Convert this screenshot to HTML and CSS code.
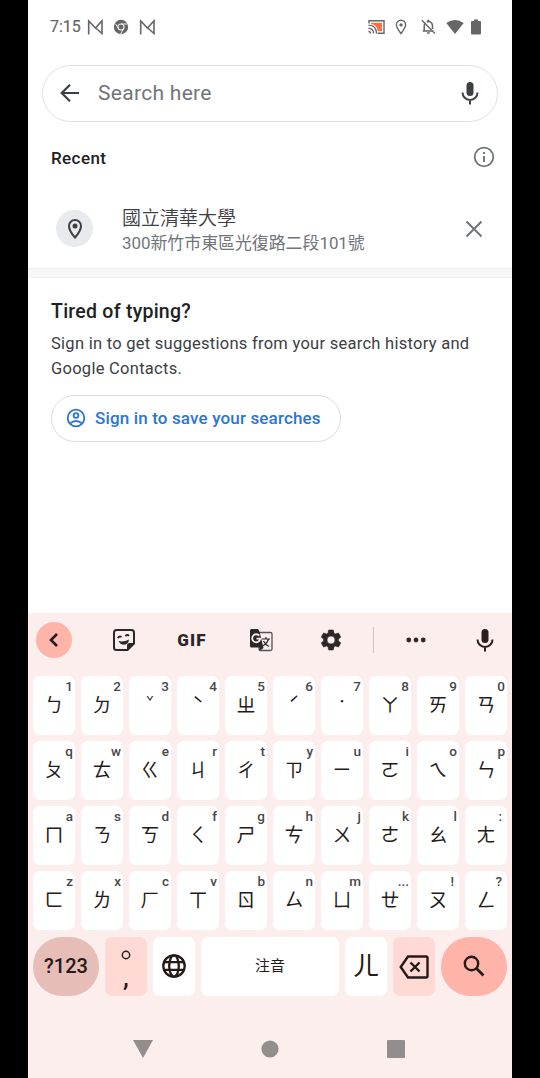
FILE: index.html
```
<!DOCTYPE html>
<html lang="zh-Hant">
<head>
<meta charset="utf-8">
<title>Search</title>
<link rel="stylesheet" href="styles.css">
</head>
<body>
<div class="screen">
  <header class="status">
    <span class="clock">7:15</span>
    <svg class="note-m" width="16" height="16" viewBox="0 0 16 16"><path d="M1.700 15.500V2L8.500 9 15 1.800V14.500L8.800 9" fill="none" stroke="#666" stroke-width="1.600"/></svg>
    <svg class="note-c" width="16" height="16" viewBox="0 0 16 16"><circle cx="8" cy="8" r="7.200" fill="#666"/><circle cx="8" cy="8" r="3" fill="none" stroke="#eee" stroke-width="1.100"/><path d="M8 5h6M5.400 9.500L2.500 4.800M10.600 9.500L7.600 15" stroke="#eee"/></svg>
    <svg class="note-m" width="16" height="16" viewBox="0 0 16 16"><path d="M1.700 15.500V2L8.500 9 15 1.800V14.500L8.800 9" fill="none" stroke="#666" stroke-width="1.600"/></svg>
    <span class="grow"></span>
    <svg class="cast" width="17" height="14" viewBox="0 0 17 14"><path d="M1 3.500V.8h15v12.400H9.500" fill="none" stroke="#666" stroke-width="1.400"/><path d="M3 2.800h11v8.500H10Q9 5 3 4z" fill="#ff7043"/><path d="M.5 5.200q8 .3 8 8.300M.5 8.200q5 .3 5 5.300M.5 11.500q2 0 2 2" fill="none" stroke="#666" stroke-width="1.300"/></svg>
    <svg class="pin" width="12" height="16" viewBox="0 0 12 16"><path d="M6 14.600C3.500 11.300 1.400 8.600 1.400 5.800a4.600 4.600 0 0 1 9.200 0c0 2.800-2.100 5.500-4.600 8.800z" fill="none" stroke="#666" stroke-width="1.400"/><circle cx="6" cy="5.900" r="1.700" fill="#666"/></svg>
    <svg class="bell" width="15" height="16" viewBox="0 0 15 16"><path d="M3.200 12V7q0-2 1.200-3.200M5.800 3Q7 2.300 8.500 2.600 11.500 3.500 11.500 7v3M1.800 12h9.500" fill="none" stroke="#666" stroke-width="1.500"/><path d="M6.300.8h2v2h-2zM5.800 13.300h3.200q-.3 1.800-1.600 1.800t-1.600-1.800z" fill="#666"/><path d="M.8 1.300l13.200 13.200" stroke="#666" stroke-width="1.400"/></svg>
    <svg class="wifi" width="18" height="14" viewBox="0 0 18 14"><path d="M.3 3Q9-2.800 17.700 3L9 14z" fill="#666"/></svg>
    <svg class="batt" width="10" height="16" viewBox="0 0 10 16"><path d="M3 .5h4V2h2q1 0 1 1v11.500q0 1-1 1H1q-1 0-1-1V3q0-1 1-1h2z" fill="#666"/></svg>
  </header>

  <div class="search">
    <svg width="20" height="20" viewBox="0 0 20 20"><path d="M19 10H2M10 1.700L1.700 10l8.300 8.300" fill="none" stroke="#3c4043" stroke-width="2.200"/></svg>
    <span class="placeholder">Search here</span>
    <svg width="18" height="24" viewBox="0 0 18 24"><rect x="5.500" y="1" width="7" height="14" rx="3.500" fill="#3c4043"/><path d="M1.500 11.500a7.500 7.500 0 0 0 15 0M9 19v4.500" fill="none" stroke="#3c4043" stroke-width="2"/></svg>
  </div>

  <div class="recent">
    <h2>Recent</h2>
    <svg width="22" height="22" viewBox="0 0 22 22"><circle cx="11" cy="11" r="9.300" fill="none" stroke="#70757a" stroke-width="1.800"/><path d="M11 10v6M11 6v2" stroke="#70757a" stroke-width="1.900"/></svg>
  </div>

  <div class="place">
    <span class="place-icon"><svg width="16" height="22" viewBox="0 0 16 22"><path d="M8 19.500C4.500 15.500 2 11.700 2 8a6 6 0 0 1 12 0c0 3.700-2.500 7.500-6 11.500z" fill="none" stroke="#3c4043" stroke-width="2"/><circle cx="8" cy="8" r="2.500" fill="#3c4043"/></svg></span>
    <div class="place-text">
      <div class="place-name">國立清華大學</div>
      <div class="place-addr">300新竹市東區光復路二段101號</div>
    </div>
    <svg width="18" height="18" viewBox="0 0 18 18"><path d="M1.500 1.500l15 15M16.500 1.500l-15 15" stroke="#70757a" stroke-width="2"/></svg>
  </div>
  <div class="divider"></div>

  <section class="signin">
    <h3>Tired of typing?</h3>
    <p>Sign in to get suggestions from your search history and<br>Google Contacts.</p>
    <div class="signin-btn">
      <svg width="20" height="20" viewBox="0 0 20 20" fill="none" stroke="#2b75d6" stroke-width="1.800"><circle cx="10" cy="10" r="8.300"/><circle cx="10" cy="7.500" r="2.400"/><path d="M4 15.500q6-5 12 0"/></svg>
      <span>Sign in to save your searches</span>
    </div>
  </section>

  <section class="keyboard">
    <div class="tools">
      <span class="tool-back"><svg width="12" height="16" viewBox="0 0 12 16"><path d="M9 2L3 8l6 6" fill="none" stroke="#241a18" stroke-width="2.600"/></svg></span>
      <svg class="t-sticker" width="24" height="24" viewBox="0 0 24 24"><path d="M15.500 22H4.500Q2 22 2 19.500v-15Q2 2 4.500 2h15Q22 2 22 4.500v11z" fill="none" stroke="#2b2827" stroke-width="2"/><path d="M15 22v-4.500q0-2.500 2.500-2.500H22zM6.500 13q5 1.300 10.500-1.500-.5 5-5 5.200-4 0-5.500-3.700z" fill="#2b2827"/><path d="M5.800 10q1.500-2.300 3.700-1.200M13.300 8q2.200-1.700 3.700-.2" fill="none" stroke="#2b2827" stroke-width="1.900"/></svg>
      <span class="t-gif">GIF</span>
      <span class="t-translate"><svg width="24" height="24" viewBox="0 0 24 24"><rect x="10" y="4.500" width="13" height="18" rx="1.500" fill="#fceeec" stroke="#555" stroke-width="1.300"/><path d="M13 11h8M17 9v2M19.500 11q-1.500 5-6 7M14.500 13q2 4 5.500 5.500" fill="none" stroke="#2b2827" stroke-width="1.200"/><path d="M2.500 1H9l1.500 2.500L14.500 20l-4 3v-3.500h-8Q1 19.500 1 18V2.500Q1 1 2.500 1z" fill="#2b2827"/><path d="M10.300 7.700A4 4 0 1 0 11.200 10.700H7.500" fill="none" stroke="#fceeec" stroke-width="1.800"/></svg></span>
      <svg class="t-gear" width="24" height="24" viewBox="0 0 24 24"><path fill="#2b2827" stroke="#2b2827" stroke-width=".6" d="M19.430 12.980c.04-.32.070-.64.070-.98s-.03-.66-.07-.98l2.110-1.650c.19-.15.24-.42.12-.64l-2-3.460c-.12-.22-.39-.3-.61-.22l-2.490 1c-.52-.4-1.080-.73-1.690-.98l-.38-2.650C14.460 2.180 14.250 2 14 2h-4c-.25 0-.46.18-.49.42l-.38 2.650c-.61.25-1.170.59-1.690.98l-2.490-1c-.23-.09-.49 0-.61.22l-2 3.460c-.13.22-.07.49.12.64l2.110 1.650c-.04.32-.07.65-.07.98s.03.66.07.98l-2.110 1.650c-.19.15-.24.42-.12.64l2 3.460c.12.22.39.3.61.22l2.490-1c.52.4 1.080.73 1.690.98l.38 2.650c.03.24.24.42.49.42h4c.25 0 .46-.18.49-.42l.38-2.650c.61-.25 1.170-.59 1.690-.98l2.490 1c.23.09.49 0 .61-.22l2-3.460c.12-.22.07-.49-.12-.64l-2.110-1.650zM12 16a4 4 0 1 1 0-8 4 4 0 0 1 0 8z"/></svg>
      <span class="t-sep"></span>
      <svg class="t-more" width="20" height="6" viewBox="0 0 20 6" fill="#2b2827"><circle cx="2.800" cy="3" r="2.400"/><circle cx="10" cy="3" r="2.400"/><circle cx="17.200" cy="3" r="2.400"/></svg>
      <svg class="t-mic" width="18" height="24" viewBox="0 0 18 24"><rect x="5.500" y="1" width="7" height="14" rx="3.500" fill="#2b1f1d"/><path d="M1.500 11.500a7.500 7.500 0 0 0 15 0M9 19v4.500" fill="none" stroke="#2b1f1d" stroke-width="2"/></svg>
    </div>
    <div class="keys">
      <div class="key"><i>1</i><b>ㄅ</b></div><div class="key"><i>2</i><b>ㄉ</b></div><div class="key tone"><i>3</i><b>ˇ</b></div><div class="key"><i>4</i><b>ˋ</b></div><div class="key"><i>5</i><b>ㄓ</b></div><div class="key"><i>6</i><b>ˊ</b></div><div class="key tone"><i>7</i><b>˙</b></div><div class="key"><i>8</i><b>ㄚ</b></div><div class="key"><i>9</i><b>ㄞ</b></div><div class="key"><i>0</i><b>ㄢ</b></div>
      <div class="key"><i>q</i><b>ㄆ</b></div><div class="key"><i>w</i><b>ㄊ</b></div><div class="key"><i>e</i><b>ㄍ</b></div><div class="key"><i>r</i><b>ㄐ</b></div><div class="key"><i>t</i><b>ㄔ</b></div><div class="key"><i>y</i><b>ㄗ</b></div><div class="key"><i>u</i><b>ㄧ</b></div><div class="key"><i>i</i><b>ㄛ</b></div><div class="key"><i>o</i><b>ㄟ</b></div><div class="key"><i>p</i><b>ㄣ</b></div>
      <div class="key"><i>a</i><b>ㄇ</b></div><div class="key"><i>s</i><b>ㄋ</b></div><div class="key"><i>d</i><b>ㄎ</b></div><div class="key"><i>f</i><b>ㄑ</b></div><div class="key"><i>g</i><b>ㄕ</b></div><div class="key"><i>h</i><b>ㄘ</b></div><div class="key"><i>j</i><b>ㄨ</b></div><div class="key"><i>k</i><b>ㄜ</b></div><div class="key"><i>l</i><b>ㄠ</b></div><div class="key punct"><i>:</i><b>ㄤ</b></div>
      <div class="key"><i>z</i><b>ㄈ</b></div><div class="key"><i>x</i><b>ㄌ</b></div><div class="key"><i>c</i><b>ㄏ</b></div><div class="key"><i>v</i><b>ㄒ</b></div><div class="key"><i>b</i><b>ㄖ</b></div><div class="key"><i>n</i><b>ㄙ</b></div><div class="key"><i>m</i><b>ㄩ</b></div><div class="key"><i>...</i><b>ㄝ</b></div><div class="key punct"><i>!</i><b>ㄡ</b></div><div class="key punct"><i>?</i><b>ㄥ</b></div>
    </div>
    <div class="bottom">
      <div class="k k-sym">?123</div>
      <div class="k k-comma"><svg width="12" height="12" viewBox="0 0 12 12"><circle cx="6" cy="6" r="3.700" fill="none" stroke="#241a18" stroke-width="1.400"/></svg><span>,</span></div>
      <div class="k"><svg width="26" height="26" viewBox="0 0 26 26" fill="none" stroke="#241a18" stroke-width="2.300"><circle cx="13" cy="13" r="10.700"/><ellipse cx="13" cy="13" rx="4.800" ry="10.700"/><path d="M3 9.200h20M3 16.800h20"/></svg></div>
      <div class="k k-space">注音</div>
      <div class="k k-er">ㄦ</div>
      <div class="k k-del"><svg width="30" height="24" viewBox="0 0 30 24" fill="none" stroke="#241a18" stroke-width="2.400"><path d="M9 1.500h18q1.500 0 1.500 1.500v18q0 1.500-1.500 1.500H9L1.700 12z"/><path d="M11.500 7.500l9 9M20.500 7.500l-9 9"/></svg></div>
      <div class="k k-go"><svg width="22" height="22" viewBox="0 0 22 22" fill="none" stroke="#241a18"><circle cx="8.500" cy="8.500" r="6.700" stroke-width="2.400"/><path d="M13 13l7.500 7.500" stroke-width="2.900"/></svg></div>
    </div>
    <div class="nav">
      <svg width="20" height="18" viewBox="0 0 20 18"><path d="M0 0h20l-10 18z" fill="#938e8d"/></svg>
      <svg width="18" height="18" viewBox="0 0 18 18"><circle cx="9" cy="9" r="8.600" fill="#938e8d"/></svg>
      <svg width="18" height="18" viewBox="0 0 18 18"><rect width="18" height="18" rx="1" fill="#938e8d"/></svg>
    </div>
  </section>
</div>
</body>
</html>
```
FILE: styles.css
```
* { box-sizing: border-box; }
body { margin: 0; background: #000; font-family: Roboto, "Noto Sans CJK TC", sans-serif; }
svg { display: block; flex: none; }
h2, h3, p { margin: 0; }
.screen { width: 484px; height: 1078px; margin-left: 28px; background: #fff; display: flex; flex-direction: column; overflow: hidden; }
.status { height: 65px; padding: 0 31px 12px 22px; display: flex; align-items: center; flex: none; }
.clock { font-size: 16px; line-height: 20px; width: 37px; color: #666; -webkit-text-stroke: .2px #666; }
.note-c { margin: 0 10px; }
.grow { flex: 1; }
.pin { margin-left: 10px; }
.bell { margin-left: 14px; }
.wifi { margin-left: 10px; }
.batt { margin-left: 7px; }
.search { margin: 0 14px; height: 57px; flex: none; border: 1.500px solid #dfe1e5; border-radius: 29px; display: flex; align-items: center; padding: 0 18px 1px 17px; }
.placeholder { flex: 1; margin-left: 18px; font-size: 21px; letter-spacing: .3px; color: #70757a; }
.recent { height: 70px; flex: none; padding: 0 17px 0 23px; display: flex; justify-content: space-between; align-items: center; }
.recent h2 { font-size: 17px; font-weight: 500; letter-spacing: .4px; color: #202124; padding-top: 2px; }
.place { height: 77px; flex: none; display: flex; align-items: center; padding: 0 29px 0 28px; margin-top: -2px; }
.place-icon { width: 37px; height: 37px; border-radius: 50%; background: #e8eaed; display: flex; align-items: center; justify-content: center; }
.place-text { flex: 1; margin-left: 29px; padding-top: 3px; }
.place-name { font-size: 19px; line-height: 25px; color: #3c4043; font-weight: 350; }
.place-addr { font-size: 16.900px; line-height: 24px; color: #70757a; font-weight: 400; }
.divider { height: 10px; margin-top: 1px; flex: none; background: #f7f8fa; border-top: 1px solid #f0f0f0; border-bottom: 1px solid #f2f2f2; }
.signin { height: 335px; flex: none; padding: 21px 23px 0; }
.signin h3 { font-size: 19.500px; line-height: 26px; font-weight: 500; color: #202124; letter-spacing: .25px; }
.signin p { font-size: 16.500px; line-height: 24.500px; margin-top: 7px; letter-spacing: .27px; color: #3c4043; white-space: nowrap; }
.signin-btn { margin-top: 14px; width: 290px; height: 47px; border: 1px solid #dadce0; border-radius: 24px; display: flex; align-items: center; padding: 0 0 1px 14px; gap: 9px; font-size: 17px; font-weight: 500; letter-spacing: .15px; color: #2b75d6; white-space: nowrap; }
.keyboard { flex: 1; background: #fceeec; }
.tools { height: 63px; display: flex; align-items: center; padding: 0 18px 9px 8px; }
.tool-back { width: 36px; height: 36px; border-radius: 50%; background: #ffb4a9; display: flex; align-items: center; justify-content: center; }
.t-sticker { margin-left: 39.500px; }
.t-gif { width: 32px; margin-left: 40.500px; margin-right: 1px; font: 900 17px/20px Roboto, sans-serif; letter-spacing: 1.200px; color: #2b2827; text-align: center; }
.t-translate { margin-left: 40px; }
.t-gear { margin-left: 46px; }
.t-sep { width: 1px; height: 26px; background: #cfc4c3; margin-left: 30px; }
.t-more { margin-left: 32px; }
.t-mic { margin-left: auto; }
.keys { display: grid; grid-template-columns: repeat(10, 42px); column-gap: 6px; grid-auto-rows: 58.500px; row-gap: 6.500px; padding-left: 5px; }
.key { background: #fff; border-radius: 7px; display: flex; flex-direction: column; align-items: center; padding-top: 2px; }
.key i { align-self: flex-end; font: 500 13.500px/16px Roboto, sans-serif; color: #4c4645; padding-right: 2px; }
.key b { font: 400 19px/20px "Noto Sans CJK TC", sans-serif; color: #241a18; }
.tone b { font-size: 13px; line-height: 14px; }
.punct i { padding-right: 5px; }
.bottom { display: grid; grid-template-columns: 66px 42px 42px 138px 42px 42px 66px; column-gap: 6px; height: 59px; margin-top: 7px; padding-left: 5px; }
.k { background: #fff; border-radius: 7px; display: flex; align-items: center; justify-content: center; color: #241a18; font-size: 15px; }
.k-space { padding-bottom: 3px; }
.k-sym { background: #e7bdb7; border-radius: 29px; font-size: 20px; font-weight: 500; }
.k-comma { background: #ffdad5; flex-direction: column; justify-content: flex-start; padding-top: 12px; font-size: 26px; font-weight: 500; line-height: 32px; }
.k-er { font: 400 26px/30px "Noto Sans CJK TC", sans-serif; padding-bottom: 4px; }
.k-del { background: #ffdad5; padding-top: 2px; }
.k-go { background: #ffb4a9; border-radius: 29px; }
.nav { display: flex; align-items: center; height: 107px; padding-left: 105px; gap: 108px; }
```
